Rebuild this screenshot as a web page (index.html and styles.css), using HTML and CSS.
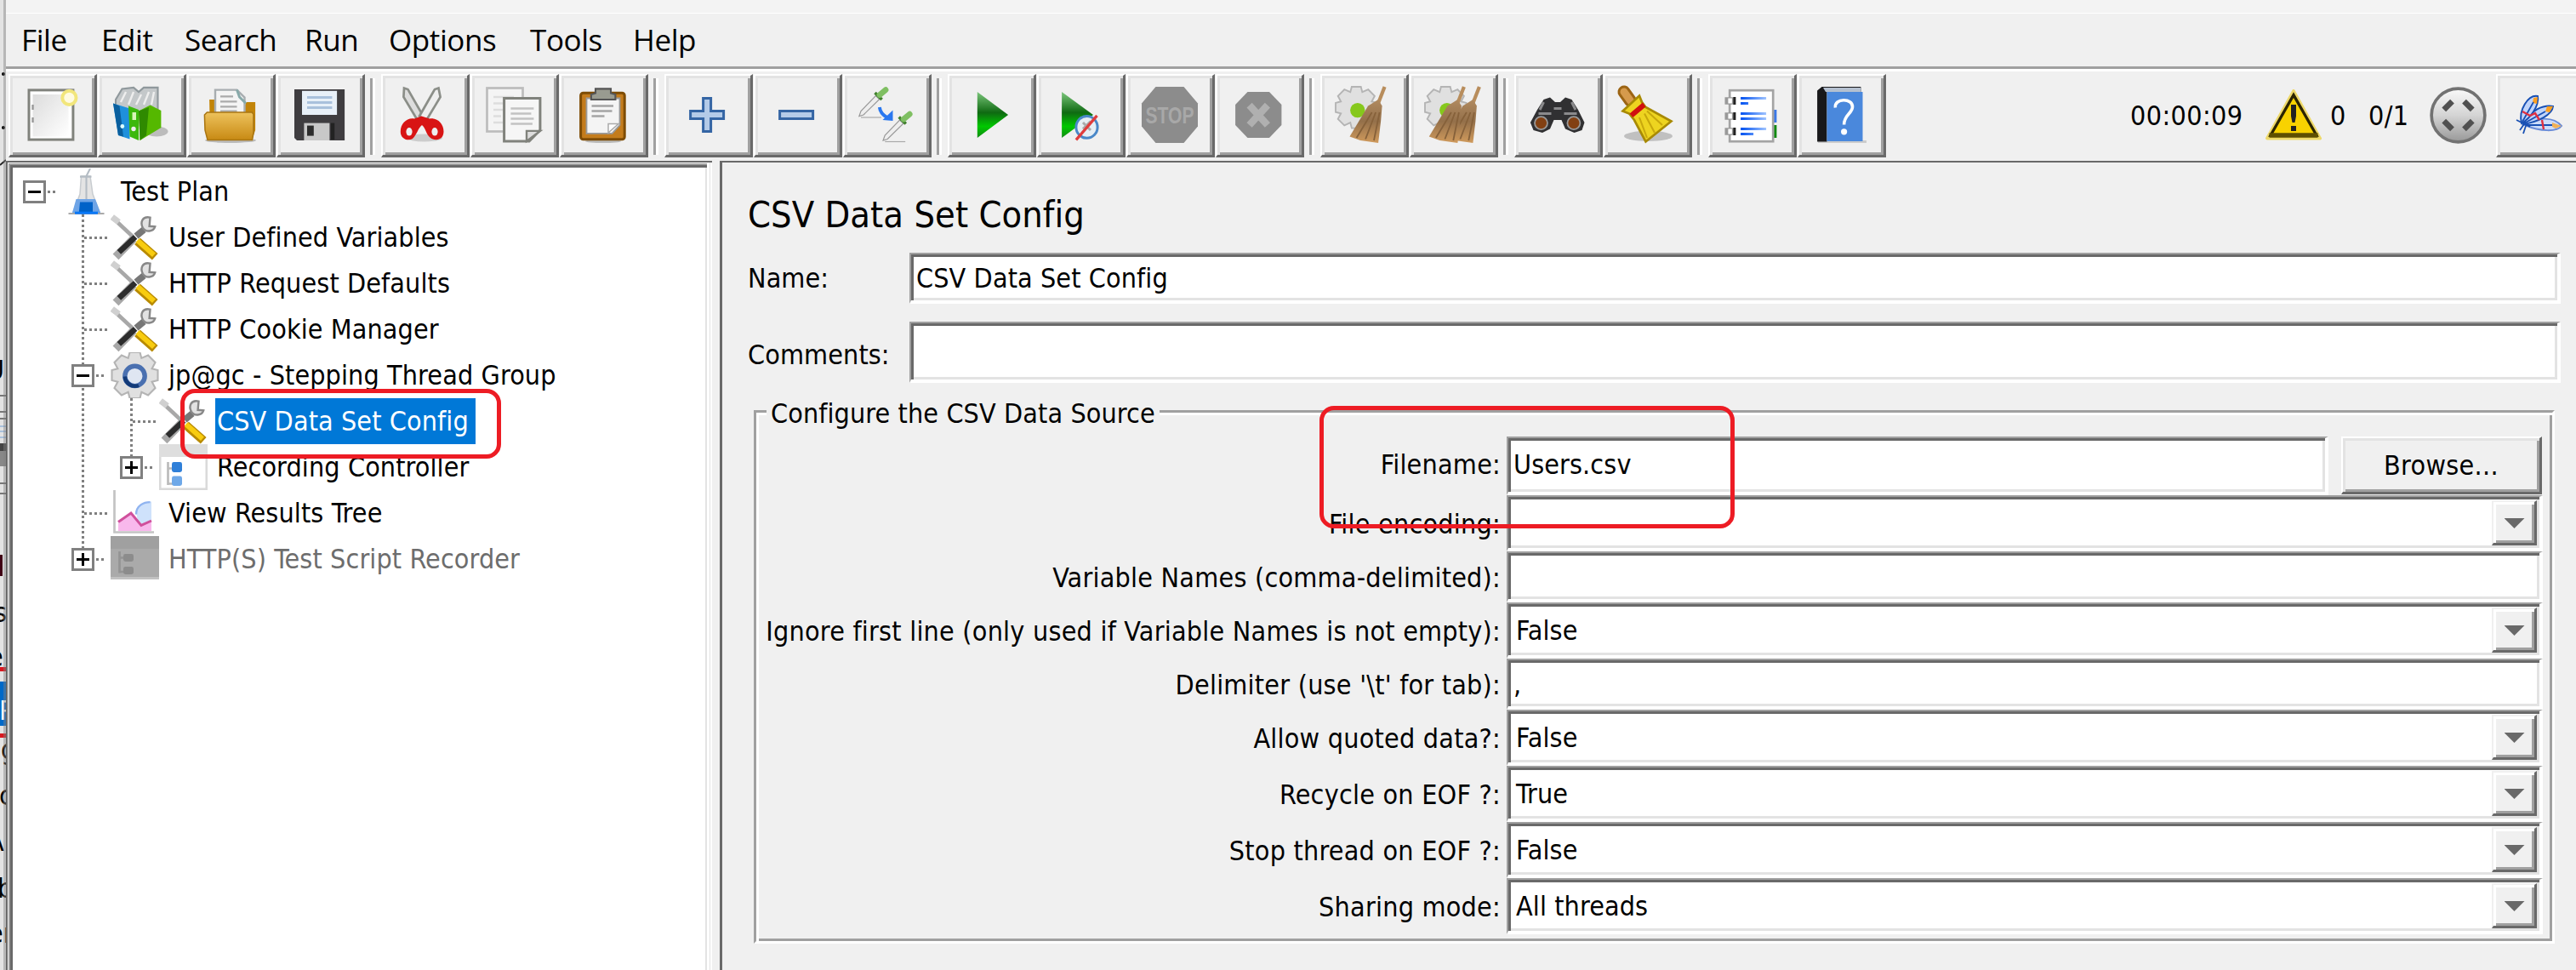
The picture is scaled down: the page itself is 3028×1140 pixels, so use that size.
FILE: index.html
```html
<!DOCTYPE html>
<html lang="en">
<head>
<meta charset="utf-8">
<title>Apache JMeter</title>
<link rel="stylesheet" href="styles.css">
</head>
<body>
<svg width="0" height="0" class="defs">
  <defs>
    <linearGradient id="green" x1="0" y1="0" x2="0" y2="1"><stop offset="0" stop-color="#7cc67c"/><stop offset=".45" stop-color="#0f6a12"/><stop offset=".75" stop-color="#00c800"/><stop offset="1" stop-color="#128a14"/></linearGradient>
    <linearGradient id="gold" x1="0" y1="0" x2="0" y2="1"><stop offset="0" stop-color="#edc25c"/><stop offset="1" stop-color="#c88a14"/></linearGradient>
    <linearGradient id="sheet" x1="0" y1="0" x2="1" y2="1"><stop offset="0" stop-color="#dcdcdc"/><stop offset="1" stop-color="#fff"/></linearGradient>
    <linearGradient id="ball" x1="0" y1="0" x2="0" y2="1"><stop offset="0" stop-color="#fafafa"/><stop offset=".5" stop-color="#d4d4d4"/><stop offset="1" stop-color="#989898"/></linearGradient>
    <linearGradient id="blue" x1="0" y1="0" x2="1" y2="0"><stop offset="0" stop-color="#0050f0"/><stop offset="1" stop-color="#a0c4ff"/></linearGradient>
    <linearGradient id="broom" x1="0" y1="0" x2="0" y2="1"><stop offset="0" stop-color="#b08a60"/><stop offset=".5" stop-color="#94704a"/><stop offset="1" stop-color="#d09a5c"/></linearGradient>
    <g id="tools">
      <path d="M1 1.5 8.500 8.500" stroke="#a8a8a8" stroke-width="1.500"/>
      <path d="M.6 1 3.200 3" stroke="#d0d0d0" stroke-width="2.400"/>
      <path d="M10 8.500 13 6" stroke="#777" stroke-width="2.600"/>
      <path d="M15.500 1.200C12.500.5 11.500 3 12.600 5.200 13.800 7.200 16.800 6.800 17.400 4.800L15.200 4.600Z" fill="#e2e2e2" stroke="#888" stroke-width=".8"/>
      <path d="M2 16.600 9 9.500" stroke="#a8a8a8" stroke-width="3.200"/>
      <path d="M3.300 14.800 9.700 8.800" stroke="#2c2c2c" stroke-width="2.200"/>
      <path d="M10.500 10.500 17.400 16.600" stroke="#b88a00" stroke-width="3.400"/>
      <path d="M10.500 10.200 17 15.900" stroke="#f8cc10" stroke-width="2"/>
    </g>
    <g id="gear">
      <path d="M7 0h4l.6 2.300 2.600-1.100 2.800 2.800-1.300 2.400L18 7v4l-2.300.6 1.300 2.400-2.800 2.800-2.600-1.200L11 18H7l-.6-2.400L3.800 16.800 1 14l1.300-2.400L0 11V7l2.300-.6L1 4l2.800-2.800 2.600 1.100Z" fill="#e0e0e0" stroke="#b4b4b4" stroke-width=".7"/>
    </g>
    <g id="broomshape">
      <path d="M14 0 10.500 9" stroke="#b88d5c" stroke-width="1.400"/>
      <path d="M7.500 7.500 11.500 5 13 7.500l-.5 6L11.500 22 4.500 21 .3 19.500Z" fill="url(#broom)"/>
      <path d="M9 10 3 20M10.500 10 6.500 20.500M12 10l-2.200 11" stroke="#86613a" stroke-width=".6" fill="none"/>
    </g>
  </defs>
</svg>

<div class="screen">
  <svg class="behind" viewBox="0 0 7 1140">
    <rect width="7" height="1140" fill="#e3e3e3"/>
    <g class="behind-text">
      <circle cx="4" cy="87" r="2"/><circle cx="4" cy="150" r="2"/>
      <path d="M0 194 7 188" stroke="#222" stroke-width="2"/>
      <text x="-16" y="446">U</text>
      <path d="M0 465H7M0 484H7M0 492H7M0 568H7M0 580H7" stroke="#777" stroke-width="2"/>
      <path d="M0 501H7M0 507H7M0 514H7" stroke="#a9c1dc" stroke-width="2"/>
      <rect y="521" width="7" height="9" fill="#444"/><rect y="530" width="7" height="18" fill="#888"/>
      <rect y="652" width="3" height="25" fill="#400014"/>
      <text x="-7" y="731">s</text><text x="-14" y="783">e</text>
      <rect y="784" width="7" height="5" fill="#d81820"/>
      <rect y="801" width="7" height="52" fill="#0069c8"/>
      <text x="-1" y="846" fill="#fff">P</text>
      <rect y="862" width="7" height="5" fill="#d81820"/>
      <text x="1" y="892">g</text><text x="-1" y="946">c</text><text x="-15" y="1000">A</text><text x="-3" y="1055">b</text><text x="-14" y="1108">er</text>
    </g>
    <rect x="4" width="3" height="1140" fill="#808080" fill-opacity=".45"/>
  </svg>

  <div class="window">
    <div class="title-edge"></div>
    <nav class="menubar">
      <span class="m-file">File</span><span class="m-edit">Edit</span><span class="m-search">Search</span><span class="m-run">Run</span><span class="m-options">Options</span><span class="m-tools">Tools</span><span class="m-help">Help</span>
    </nav>

    <div class="toolbar">
      <div class="group">
        <div class="tool"><svg viewBox="0 0 22 22"><rect x="2" y="1.300" width="17.300" height="19.400" fill="#fff" stroke="#80827c"/><rect x="3.500" y="3" width="14" height="16.500" fill="url(#sheet)"/><path d="M3.500 7v2M3.500 12v2" stroke="#999" stroke-width=".8"/><circle cx="17.800" cy="4.300" r="2.700" fill="#fffbe0" stroke="#f2e67c" stroke-width="1.300"/></svg></div>
        <div class="tool"><svg viewBox="0 0 22 22"><ellipse cx="17" cy="17.500" rx="4.500" ry="2" fill="#999" opacity=".6"/><path d="M1 5 3.500.8 8 .3 10 2 12 .3H17.500V9L8 10 1 8Z" fill="#c4c8ca" stroke="#8f989c" stroke-width=".7"/><path d="M3 6 5 2M6 7 8 2M9 7l2-4M12 7l2-5M15 7l1-5" stroke="#eee" stroke-width=".8"/><path d="M0 6.500 6.500 8.500V20.500L2 19Z" fill="#1f90dc"/><path d="M0 6.500 2.500 7.500 4 19.500 2 19Z" fill="#0a5f9e"/><path d="M6 7.500 10 9v12L6.500 19.500Z" fill="#3cb80c"/><path d="M10 9.500 14.500 7.200 18.800 9.300V16L10.500 21Z" fill="#55b800"/><path d="M10 9.500 14 8l-1 11-2.500 2Z" fill="#2f8a00"/><circle cx="8" cy="16.500" r=".9" fill="#eee"/><rect x="7.500" y="10" width="1.500" height="3" fill="#d8f5b8"/><circle cx="3.600" cy="15.500" r=".8" fill="#dff"/></svg></div>
        <div class="tool"><svg viewBox="0 0 22 22"><ellipse cx="11" cy="21" rx="10" ry="1" fill="#bbb"/><path d="M2.700 5h4v4h9l1.500-3H20.700V17l-1.200 3.500H3Z" fill="#c28408"/><path d="M5 1.200h8.500l3 3V10.500H5Z" fill="#f4f4f4" stroke="#a8adb0" stroke-width=".8"/><path d="M7 3.800h5M7 5.800h6.500M7 7.800h6.500M7 9.500h6.500" stroke="#aaa" stroke-width=".7"/><path d="M13.500 1.200 14.500 4 17 6.500" fill="none" stroke="#8aa" stroke-width="1"/><path d="M.8 11 1.800 10H19.400L20 10.800V18l-.5 2.800H2L1 17Z" fill="url(#gold)" stroke="#a87410" stroke-width=".5"/></svg></div>
        <div class="tool"><svg viewBox="0 0 22 22"><path d="M1 1H20.700V21H2L1 20Z" fill="#3f3d40"/><rect x="4" y="1.600" width="13.700" height="9.400" fill="#e8f0f8"/><path d="M6 4.200h9.800M6 6.200h9.800M6 8.200h9.800" stroke="#a9c1dc" stroke-width="1"/><rect x="4.800" y="14.200" width="10" height="6.800" fill="#c8c8c8"/><rect x="6" y="15.200" width="2.600" height="4" fill="#2c2c2c"/><path d="M16 14.200v6.500" stroke="#222" stroke-width="1.500"/></svg></div>
      </div>
      <i class="sep"></i>
      <div class="group">
        <div class="tool"><svg viewBox="0 0 22 22"><ellipse cx="11" cy="20" rx="7" ry="1.500" fill="#ccc"/><path d="M3 .5 2.800 4 8.500 13.500 10.500 11.500 4.500 1Z" fill="#ddd" stroke="#8b8e88" stroke-width=".9"/><path d="M16.500.5 17.200 4 11.500 13.500 9 11.500 15 1Z" fill="#eee" stroke="#8b8e88" stroke-width=".9"/><path d="M9.800 11.500 13 12.500C16 12 18.500 14.500 18.500 17.500 18.500 20.500 16 21.300 13.800 20.300 11.500 19 11.500 16 10 15 8.500 16 8 19 6.200 20.400 4 21.500 1.500 20 1.600 17.500 1.600 14.500 4 12 7 12.500Z" fill="#d81414"/><ellipse cx="5" cy="17.600" rx="1.200" ry="1.600" fill="#eee"/><ellipse cx="15" cy="17.600" rx="1.200" ry="1.600" fill="#eee"/></svg></div>
        <div class="tool"><svg viewBox="0 0 22 22"><rect x=".5" y=".5" width="14" height="17" fill="#f4f4f4" stroke="#bcbcbc" stroke-width=".9"/><path d="M3 4h8M3 6.500h5M3 9h4M3 11.500h3M3 14h4" stroke="#ddd" stroke-width=".8"/><path d="M7.200 4.500H21.300V17L17 21.300H7.200Z" fill="#f6f6f6" stroke="#80827c" stroke-width="1"/><path d="M9.800 8.500h9M9.800 10.500h8M9.800 12.500h9M9.800 14.500h8.500" stroke="#c2c2c2" stroke-width=".8"/><path d="M16 21.300V17.300H21.300Z" fill="#ddd" stroke="#80827c" stroke-width=".8"/></svg></div>
        <div class="tool"><svg viewBox="0 0 22 22"><ellipse cx="11" cy="21.300" rx="7" ry=".7" fill="#bbb"/><rect x="2.200" y="2.400" width="17.200" height="18.200" rx="1" fill="#c47c1c" stroke="#7e4c04"/><path d="M4.500 4.500h13V15L14.500 18.300H4.500Z" fill="#f4f4f4" stroke="#999" stroke-width=".6"/><path d="M6.500 7.500h8.500M6.500 9.500h8M6.500 11.500h5" stroke="#a4a4a4" stroke-width=".8"/><path d="M13 18V14.500H17Z" fill="#fff" stroke="#aaa" stroke-width=".5"/><path d="M8 .8H14V2.500L15.800 3V5H6.300V3L8 2.500Z" fill="#999b90" stroke="#555" stroke-width=".7"/></svg></div>
      </div>
      <i class="sep"></i>
      <div class="group">
        <div class="tool"><svg viewBox="0 0 22 22"><path d="M9.200 4.500h3V9.500h5v3h-5v5h-3v-5h-5v-3h5Z" fill="#b4cbe8" stroke="#3465a4"/></svg></div>
        <div class="tool"><svg viewBox="0 0 22 22"><rect x="4.200" y="9.500" width="13" height="3" fill="#b4cbe8" stroke="#3465a4"/></svg></div>
        <div class="tool"><svg viewBox="0 0 22 22"><g id="pip"><path d="M1 12H9" stroke="#aaa" stroke-width=".4"/><path d="M.3 11.500 1 9.500 6.800 3.500 8.200 4.900 2 11Z" fill="#eee" stroke="#999" stroke-width=".4"/><path d="M6.500 2.300 9.200 5" stroke="#3f7f2c" stroke-width="1.200"/><path d="M8.300 3.200 10.700 1.200" stroke="#7fbf62" stroke-width="2.200" stroke-linecap="round"/></g><use href="#pip" x="9.400" y="9.500"/><path d="M8.300 8C8.500 10 9.500 11 11.200 12" fill="none" stroke="#2a78f0" stroke-width="1.300"/><path d="M13.500 9.200V13.300L9.500 13Z" fill="#2a78f0"/></svg></div>
      </div>
      <i class="sep"></i>
      <div class="group">
        <div class="tool"><svg viewBox="0 0 22 22"><path d="M5.600 2 17.700 11 5.600 20Z" fill="url(#green)"/></svg></div>
        <div class="tool"><svg viewBox="0 0 22 22"><path d="M3.700 2 16 11 3.700 20Z" fill="url(#green)"/><ellipse cx="13.500" cy="15.800" rx="4.200" ry="4.300" fill="#e6eef4" stroke="#4a88c8" stroke-width="1"/><path d="M12 14l3 3M15 13.500l-3 3" stroke="#aaa"/><path d="M9.300 20.800 17.500 11.300" stroke="#e03c3c" stroke-width="1.100"/></svg></div>
        <div class="tool"><svg viewBox="0 0 22 22"><path d="M5.500 0h11L22 6.500v9L16.500 22h-11L0 15.500v-9Z" fill="#8c8c8c"/><text x="11" y="14.400" class="stop" textLength="19" lengthAdjust="spacingAndGlyphs">STOP</text></svg></div>
        <div class="tool"><svg viewBox="0 0 22 22"><path d="M6.500 2h8.500L19.800 7v8L15 20H6.500L1.700 15V7Z" fill="#8c8c8c"/><path d="M7.200 7.200 14.300 15M14.300 7.200 7.200 15" stroke="#b0b0b0" stroke-width="2.800"/></svg></div>
      </div>
      <i class="sep"></i>
      <div class="group">
        <div class="tool"><svg viewBox="0 0 22 22"><use href="#gear" transform="scale(.9)"/><circle cx="8.600" cy="9.200" r="2.900" fill="#86c81c"/><use href="#broomshape" x="5.200"/></svg></div>
        <div class="tool"><svg viewBox="0 0 22 22"><use href="#gear" transform="scale(.9)"/><circle cx="8.600" cy="9.200" r="2.900" fill="#86c81c"/><use href="#broomshape" x="7.300"/><use href="#broomshape" x="1.300"/></svg></div>
      </div>
      <i class="sep"></i>
      <div class="group">
        <div class="tool"><svg viewBox="0 0 22 22"><path d="M5.500 5 8 4.200 10 6h2L14 4.200 16.500 5 19 9 21.500 14 20.500 17 17.500 18 14 16.500 12.500 13h-3L8 16.500 5 18 1.500 17 .3 14 3 9Z" fill="#303032"/><path d="M5.500 6 4 9M16.500 6 18 9M9.500 8.500h3M3.500 10.500h5M13.500 10.500h5" stroke="#8a8a8c" stroke-width="1"/><circle cx="4.500" cy="14.200" r="2.500" fill="#824012" stroke="#999" stroke-width=".6"/><circle cx="17.300" cy="14.200" r="2.500" fill="#824012" stroke="#999" stroke-width=".6"/></svg></div>
        <div class="tool"><svg viewBox="0 0 22 22"><ellipse cx="11.500" cy="19.300" rx="9.500" ry="2" fill="#c0c0c0"/><path d="M2 2 4.500 5.500" stroke="#9c6414" stroke-width="5" stroke-linecap="round"/><path d="M2 2 4.500 5.500" stroke="#d69a4c" stroke-width="3" stroke-linecap="round"/><path d="M1.500 9.500 8 3.500 9 6 10.500 8 20.500 13.500 10.500 21.500 6 13 4 10.500Z" fill="#edd420" stroke="#a88a04" stroke-width=".9"/><path d="M8 12 11 20M10 10.500 14 18M11 9.500 17 15" stroke="#c8a80c" stroke-width=".7"/><path d="M4.200 10.500 9.300 6.200 10.500 7.800 5.500 12Z" fill="#d01010"/></svg></div>
      </div>
      <i class="sep"></i>
      <div class="group">
        <div class="tool"><svg viewBox="0 0 22 22"><path d="M18.500 9h2.300v5h-2.300Z" fill="#3a78e8"/><path d="M18.500 15h2.300v5h-2.300Z" fill="#108a10"/><rect x="2.400" y="1.400" width="17" height="20" fill="#fff" stroke="#a4a4a4" stroke-width=".9"/><path d="M.5 5.500h4M.5 11.500h4M.5 17.500h4" stroke="#999" stroke-width="2.800"/><path d="M4.300 4v3M4.300 10v3M4.300 16v3" stroke="#222" stroke-width="1"/><path d="M1.800 4.500h1.500v2H1.800zM1.800 10.500h1.500v2H1.800zM1.800 16.500h1.500v2H1.800z" fill="#fff"/><path d="M6.700 4h10v1h-10zM6.700 6h3v1h-3zM6.700 10h10v1h-10zM6.700 12h10v1h-10zM6.700 16h10v1h-10zM6.700 18h5v1h-5z" fill="url(#blue)"/></svg></div>
        <div class="tool"><svg viewBox="0 0 22 22"><path d="M2 21.500H21" stroke="#ccc"/><path d="M1.700 1.500 3.500 0H18.800V2H5.500V21.500H1.700Z" fill="#18181a"/><path d="M4 .3H18.800V2H5Z" fill="#b4c0d0"/><path d="M5.500 2H19.500V21.300H5.500Z" fill="#4a88dc"/><path d="M8.800 8.200C8.200 4.300 15.800 4.300 15.500 8 15.300 10.500 12.200 11 12.200 14.800" fill="none" stroke="#fff" stroke-width="1.200"/><circle cx="12.200" cy="17.600" r="1.200" fill="#fff"/></svg></div>
      </div>
      <div class="status">
        <span class="timer">00:00:09</span>
        <svg class="warn" viewBox="0 0 22 20"><path d="M11 .6 21.400 19.200H.6Z" fill="#f7d000" stroke="#eed96a" stroke-width="1.200" stroke-linejoin="round"/><path d="M11 2.200 20 18H2Z" fill="#f8d200" stroke="#2b2400" stroke-width="1.100"/><path d="M1.500 18H20.500" stroke="#5e4f00" stroke-width="1.900"/><path d="M10 6h2v4.500l-.5 2.500h-1L10 10.500ZM10 14.300h2v2h-2Z" fill="#222"/></svg>
        <span class="errors">0</span>
        <span class="threads">0/1</span>
        <svg class="ball" viewBox="0 0 22 22"><circle cx="11" cy="11" r="10.300" fill="url(#ball)" stroke="#727272" stroke-width="1.200"/><path d="M5.500 8.800 8.700 5.600M13.300 5.600 16.500 8.800M5.500 13.200 8.700 16.400M13.300 16.400 16.500 13.200" stroke="#505050" stroke-width="2.200"/></svg>
        <div class="tool"><svg viewBox="0 0 66 66"><g transform="translate(2 1)" stroke="#1850b4" stroke-width="2"><path d="M14 44C28 34 48 34 57 45 52 52 32 52 14 44Z" fill="#ccdcfa" stroke="#6a8cd8"/><path d="M46 41 57 45 50 48 46 46Z" fill="#f0b058" stroke="none"/><path d="M12 43C20 26 36 20 47 22 46 32 30 40 12 43Z" fill="#c0d4fa"/><path d="M40 22 47 22 43 29 38 28Z" fill="#ffa020" stroke="none"/><path d="M10 42C6 26 18 8 29 10 31 22 20 36 10 42Z" fill="#c0d4fa"/><path d="M24 12 29 11 28 19 23 18Z" fill="#ffa020" stroke="none"/><path d="M11 40 24 17M13 42 38 28M16 44 46 44M4 38 20 46M8 50 15 40M12 54 16 42" stroke-width="1.800"/><path d="M11 28 20 33 26 30 31 38M34 38 36 49" fill="none" stroke="#e03040" stroke-width="2.400"/></g></svg></div>
      </div>
    </div>

    <div class="panes">
      <div class="tree-pane">
        <div class="tree">
          <div class="row"><i class="cell stub"><b class="box"></b></i><svg class="node" viewBox="0 0 19 18"><path d="M7.500 3h3.500l1 7 3 8H4l3-8Z" fill="#e4e4e4" stroke="#c8ccd0" stroke-width=".5"/><path d="M7 3.200H11.500M11 0 9.500 3V12" stroke="#b4bcc4" stroke-width=".7" fill="none"/><path d="M5.500 12H13L15.300 18H3.800Z" fill="#6ea4e6"/><path d="M7 13.200H12V18H6.500Z" fill="#0062c8"/><path d="M2.500 17.700H16.500" stroke="#aaa" stroke-width=".7"/><path d="M5 17.400H14" stroke="#0878f8"/></svg><span class="root">Test Plan</span></div>
          <div class="row"><i class="cell"></i><i class="cell line tee"></i><svg class="node" viewBox="0 0 19 18"><use href="#tools"/></svg><span>User Defined Variables</span></div>
          <div class="row"><i class="cell"></i><i class="cell line tee"></i><svg class="node" viewBox="0 0 19 18"><use href="#tools"/></svg><span>HTTP Request Defaults</span></div>
          <div class="row"><i class="cell"></i><i class="cell line tee"></i><svg class="node" viewBox="0 0 19 18"><use href="#tools"/></svg><span>HTTP Cookie Manager</span></div>
          <div class="row"><i class="cell"></i><i class="cell line stub"><b class="box"></b></i><svg class="node" viewBox="0 0 19 18"><use href="#gear" x=".5"/><circle cx="9.500" cy="9.300" r="3.900" fill="#dfe6f2" stroke="#4a70b0" stroke-width="1.800"/><path d="M5.600 9.500A4 4 0 0 0 11 13" fill="none" stroke="#123a78" stroke-width="1.500"/></svg><span>jp@gc - Stepping Thread Group</span></div>
          <div class="row"><i class="cell"></i><i class="cell line"></i><i class="cell line tee"></i><svg class="node" viewBox="0 0 19 18"><use href="#tools"/></svg><span class="selected">CSV Data Set Config</span></div>
          <div class="row"><i class="cell"></i><i class="cell line"></i><i class="cell line last stub"><b class="box plus"></b></i><svg class="node" viewBox="0 0 19 18"><rect x=".4" y=".4" width="18.200" height="17.200" fill="#fff" stroke="#dadada" stroke-width=".9"/><rect width="19" height="5" fill="#dedede"/><path d="M3.500 7V16M3.500 9.500H5M3.500 15.500H6" stroke="#bbb" stroke-width=".9" fill="none"/><rect x="5" y="7" width="4" height="4" rx=".8" fill="#2f7fd8"/><rect x="5" y="12.500" width="4" height="3.800" rx=".8" fill="#6ea8e8"/></svg><span>Recording Controller</span></div>
          <div class="row"><i class="cell"></i><i class="cell line tee"></i><svg class="node" viewBox="0 0 19 18"><path d="M1.500 0V16.500H17" fill="none" stroke="#c4c4c4" stroke-width=".9"/><path d="M3 16V13L8 9.300 12 14 16 12V16Z" fill="#f8b8ec"/><path d="M10 8.500C10.500 5.500 13 4.500 16 4.500V12L12.500 13.500 10.500 11.500Z" fill="#cfe2fb"/><path d="M10 9.500C10 6 13 4.700 15.500 4.700" fill="none" stroke="#90b4f0" stroke-width=".8"/><path d="M3 12.500 8 9 12 13.800 16 12" fill="none" stroke="#d0509c" stroke-width="1"/></svg><span>View Results Tree</span></div>
          <div class="row"><i class="cell"></i><i class="cell line last stub"><b class="box plus"></b></i><svg class="node" viewBox="0 0 19 18"><rect width="19" height="17" fill="#aaa"/><rect y="16" width="19" height="1" fill="#c2c2c2"/><rect width="19" height="5" fill="#a0a0a0"/><path d="M3.500 6V14.500M3.500 8.500H5M3.500 14H6" stroke="#949494" stroke-width=".9" fill="none"/><rect x="5" y="7" width="4" height="3" rx=".8" fill="#8c8c8c"/><rect x="5" y="12" width="4" height="3" rx=".8" fill="#8c8c8c"/></svg><span class="disabled">HTTP(S) Test Script Recorder</span></div>
        </div>
        <div class="callout callout-tree"></div>
      </div>

      <div class="editor">
        <h1>CSV Data Set Config</h1>
        <div class="line-field"><label>Name:</label><div class="input"><p>CSV Data Set Config</p></div></div>
        <div class="line-field comments"><label>Comments:</label><div class="input"></div></div>
        <div class="config">
          <div class="legend">Configure the CSV Data Source</div>
          <div class="form">
            <label class="label-file">Filename:</label>
            <div class="file"><div class="input"><p>Users.csv</p></div><div class="browse">Browse...</div></div>
            <label>File encoding:</label><div class="input combo"><p></p><b></b></div>
            <label>Variable Names (comma-delimited):</label><div class="input"></div>
            <label>Ignore first line (only used if Variable Names is not empty):</label><div class="input combo"><p>False</p><b></b></div>
            <label>Delimiter (use '\t' for tab):</label><div class="input"><p>,</p></div>
            <label>Allow quoted data?:</label><div class="input combo"><p>False</p><b></b></div>
            <label>Recycle on EOF ?:</label><div class="input combo"><p>True</p><b></b></div>
            <label>Stop thread on EOF ?:</label><div class="input combo"><p>False</p><b></b></div>
            <label>Sharing mode:</label><div class="input combo"><p>All threads</p><b></b></div>
          </div>
          <div class="callout callout-file"></div>
        </div>
      </div>
    </div>
  </div>
</div>
</body>
</html>
```
FILE: styles.css
```css
* { box-sizing: border-box; }
body {
  margin: 0;
  background: #f0f0f0;
  color: #000;
  font: 32px/38px "DejaVu Sans Condensed", "DejaVu Sans", sans-serif;
  font-stretch: condensed;
  letter-spacing: .1px;
}
p, h1 { margin: 0; font-weight: normal; }
span, label, p { white-space: nowrap; }
svg { display: block; flex: none; }
.defs { position: absolute; }

.screen { display: flex; width: 3028px; height: 1140px; overflow: hidden; }
.behind { width: 7px; height: 1140px; }
.behind-text { font-size: 32px; }
.window { flex: none; width: 3021px; height: 1140px; display: flex; flex-direction: column; overflow: hidden; }

.title-edge { height: 16px; background: #f3f3f3; border-bottom: 1px solid #fff; }
.menubar {
  height: 68px;
  display: flex;
  align-items: center;
  padding: 0 0 4px 18px;
  border-bottom: 3px solid #fff;
  box-shadow: inset 0 -3px #a0a0a0;
  font-family: "Open Sans", "Noto Sans", sans-serif;
  font-stretch: normal;
  font-size: 35px;
  letter-spacing: -.4px;
}
.m-file { width: 94px; }
.m-edit { width: 98px; }
.m-search { width: 141px; }
.m-run { width: 99px; }
.m-options { width: 166px; }
.m-tools { width: 121px; }

.toolbar {
  height: 105px;
  flex: none;
  display: flex;
  padding: 3px 0 4px 3px;
}
.group { flex: none; display: flex; gap: 1px; }
.tool {
  flex: none;
  width: 104px;
  height: 98px;
  border: solid;
  border-width: 2px 3px 3px 2px;
  border-color: #fff #696969 #696969 #fff;
  box-shadow: inset 3px 3px #e3e3e3, inset -3px -3px #a0a0a0;
  padding: 13px 0 0 16px;
}
.tool svg { width: 66px; height: 66px; overflow: visible; }
.stop { font: bold 9.5px "Liberation Sans", sans-serif; letter-spacing: 0; text-anchor: middle; fill: #a8a8a8; }
.sep {
  flex: none;
  width: 6px;
  height: 90px;
  margin: 5px 7px 0 6px;
  border-left: 3px solid #a0a0a0;
  border-right: 3px solid #fff;
}
.status { flex: none; display: flex; align-items: center; height: 98px; margin-left: 287px; letter-spacing: .4px; }
.timer { width: 159px; }
.warn { width: 66px; height: 60px; margin-top: -2px; }
.errors { width: 45px; margin-left: 10px; }
.threads { width: 72px; }
.ball { width: 67px; height: 67px; margin-right: 11px; margin-top: -2px; }

.panes { flex: 1; display: flex; min-height: 0; }
.tree-pane {
  position: relative;
  flex: none;
  width: 830px;
  border-top: 2px solid #696969;
  border-left: 2px solid #696969;
  padding: 1px 2px 0 1px;
  background: #fff;
  box-shadow: inset -2px 0 #fff, inset -3px 0 #e3e3e3;
}
.tree {
  height: 100%;
  margin-right: 4px;
  border-top: 2px solid #a0a0a0;
  border-left: 2px solid #a0a0a0;
  box-shadow: inset 3px 3px #696969;
  padding: 4px 0 0 0;
  background: linear-gradient(#e3e3e3, #e3e3e3) 817px 0 / 2px 100% no-repeat #fff;
}
.row { height: 54px; display: flex; align-items: center; }
.cell { flex: none; width: 57px; height: 54px; display: flex; align-items: center; justify-content: center; }
.line { background: repeating-linear-gradient(#808080 0 3px, transparent 3px 6px) 27px 0 / 3px 54px no-repeat; }
.tee { background: repeating-linear-gradient(#808080 0 3px, transparent 3px 6px) 27px 0 / 3px 54px no-repeat, repeating-linear-gradient(90deg, #808080 0 3px, transparent 3px 6px) 30px 26px / 27px 3px no-repeat; }
.stub::after { content: ""; flex: none; width: 13px; height: 3px; margin-right: -13px; background: repeating-linear-gradient(90deg, transparent 0 2px, #808080 2px 5px, transparent 5px 6px); }
.last { background-size: 3px 14px; }
.box {
  width: 27px;
  height: 27px;
  border: 3px solid #808080;
  background: linear-gradient(#000, #000) center / 15px 3px no-repeat #fff;
}
.box.plus { background: linear-gradient(#000, #000) center / 15px 3px no-repeat, linear-gradient(#000, #000) center / 3px 15px no-repeat #fff; }
.node { width: 57px; height: 54px; margin: 0 9px 0 4px; }
.row span { height: 54px; line-height: 54px; padding: 0 0 0 2px; }
.row .root { padding-left: 3px; }
.row .selected { width: 306px; background: #0078d7; color: #fff; }
.row .disabled { color: #6d6d6d; }

.callout { position: absolute; border: 5px solid #ed1c24; border-radius: 17px; }
.callout-tree { left: 203px; top: 266px; width: 377px; height: 82px; }
.callout-file { left: 662px; top: -8px; width: 488px; height: 144px; }

.editor {
  flex: none;
  width: 2182px;
  margin-left: 9px;
  border-top: 2px solid #696969;
  border-left: 3px solid #696969;
  padding: 34px 18px 0 30px;
}
h1 { height: 54px; margin-bottom: 18px; font-size: 43px; line-height: 54px; letter-spacing: .05px; }
.line-field { display: flex; align-items: center; height: 60px; }
.line-field label { flex: none; width: 190px; }
.comments { height: 72px; margin: 21px 0 32px; }
.comments label { padding-top: 5px; }

.input {
  flex: 1;
  align-self: stretch;
  display: flex;
  align-items: center;
  background: #fff;
  border: solid;
  border-width: 2px 4px 4px 2px;
  border-color: #a0a0a0 #fff #fff #a0a0a0;
  box-shadow: inset 3px 3px #696969, inset -3px -3px #e3e3e3;
  padding: 3px 3px 3px 6px;
}
.input p { flex: 1; padding-top: 2px; }
.combo { padding: 3px 3px 3px 9px; }
.combo b {
  flex: none;
  width: 53px;
  height: 53px;
  margin-top: 1px;
  display: flex;
  justify-content: center;
  padding: 19px 0 0 1px;
  background: #f0f0f0;
  border: solid;
  border-width: 2px 3px 3px 2px;
  border-color: #f0f0f0 #696969 #696969 #f0f0f0;
  box-shadow: inset 3px 3px #fff, inset -3px -3px #a0a0a0;
}
.combo b::before { content: ""; width: 24px; height: 12px; background: #696969; clip-path: polygon(0 0, 100% 0, 50% 100%); }

.config {
  position: relative;
  width: 2117px;
  height: 627px;
  margin-left: 7px;
  border: 3px solid #a0a0a0;
  border-right-color: #fff;
  border-bottom-color: #fff;
  box-shadow: inset 3px 3px #fff, inset -3px -3px #a0a0a0;
}
.legend {
  width: 462px;
  height: 38px;
  margin: -20px 0 0 12px;
  padding-left: 5px;
  line-height: 42px;
  background: #f0f0f0;
}
.form {
  display: grid;
  grid-template-columns: 875px 1218px;
  grid-template-rows: 69px 66px 60px 66px 60px repeat(4, 66px);
  align-items: center;
  margin: 10px 0 0 7px;
}
.form label { justify-self: end; padding-right: 7px; padding-top: 1px; letter-spacing: .22px; }
.form .label-file { padding: 0 7px 3px 0; }
.form .input { height: 100%; }
.file { display: flex; height: 69px; gap: 15px; }
.file p { padding: 0 0 1px; }
.browse {
  flex: none;
  width: 236px;
  height: 68px;
  margin-right: 1px;
  text-align: center;
  line-height: 64px;
  letter-spacing: .3px;
  border: solid;
  border-width: 2px 3px 3px 2px;
  border-color: #fff #696969 #696969 #fff;
  box-shadow: inset 3px 3px #e3e3e3, inset -3px -3px #a0a0a0;
}
```
